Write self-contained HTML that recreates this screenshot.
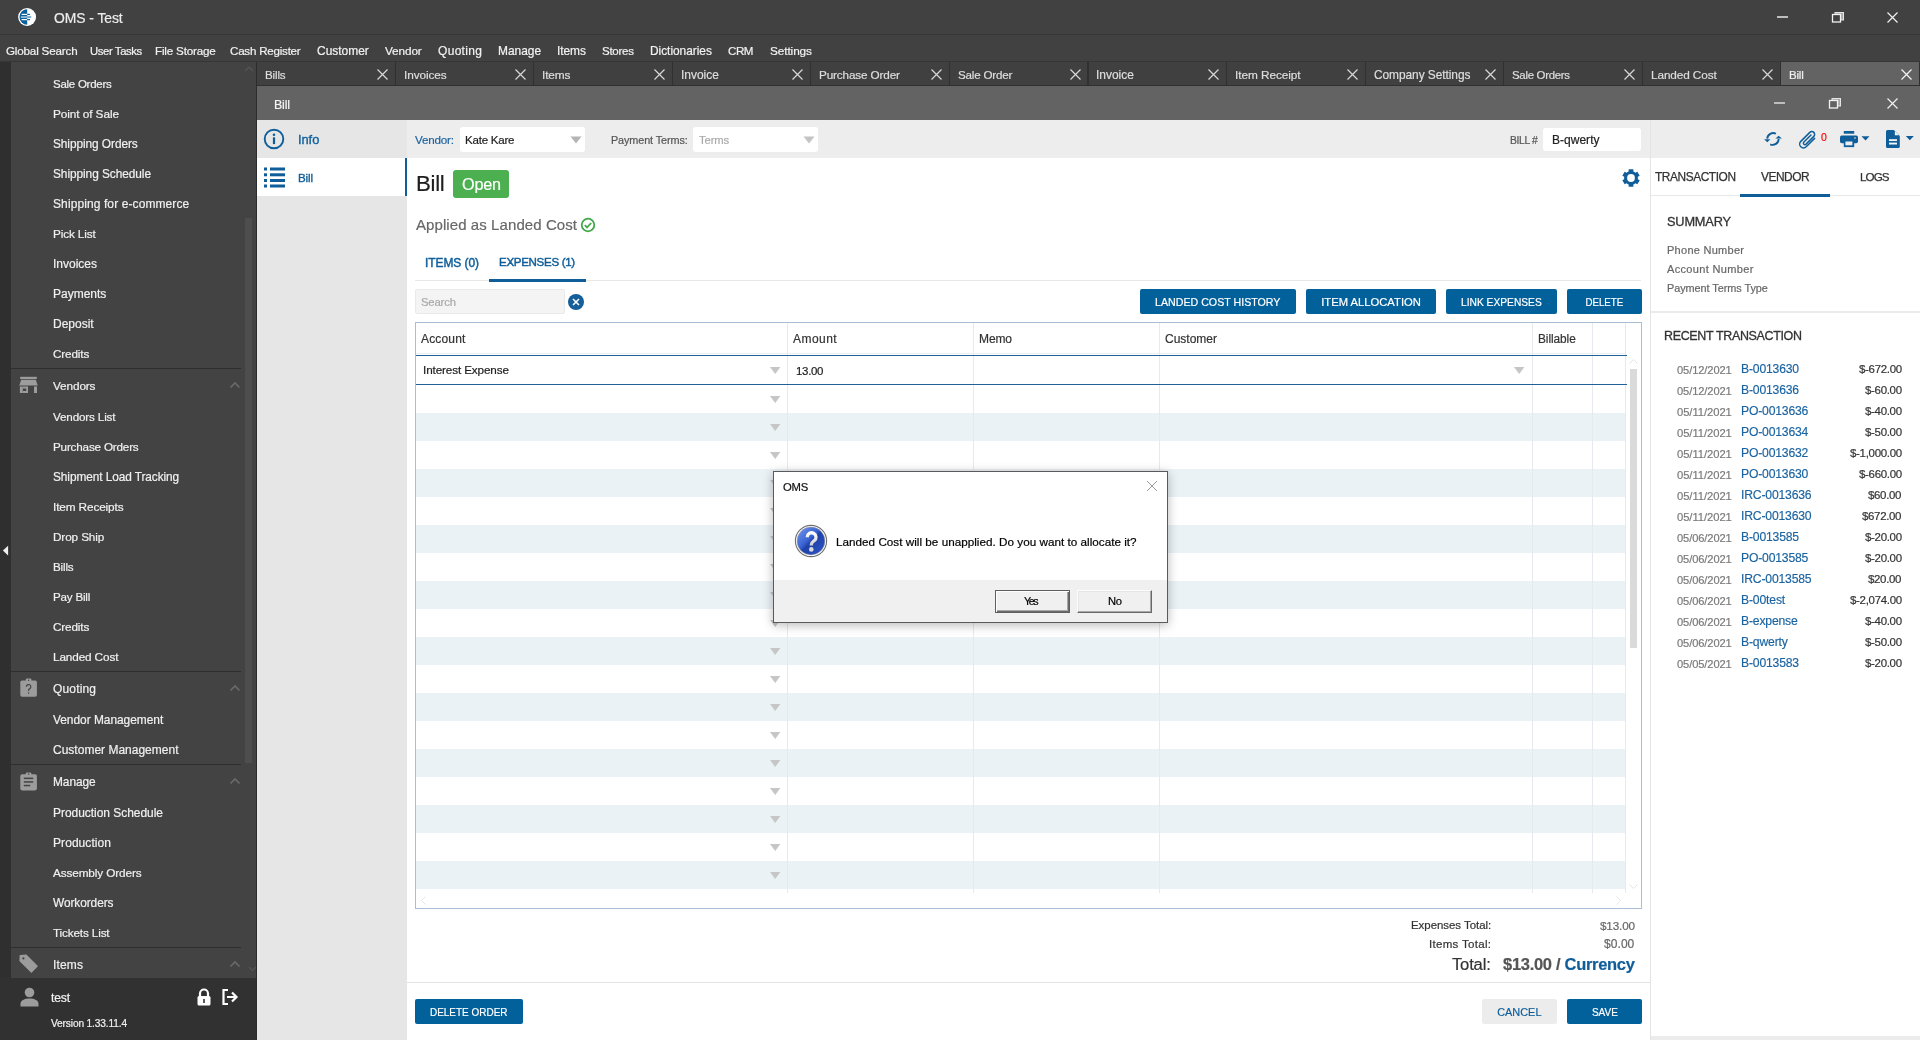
<!DOCTYPE html>
<html><head><meta charset="utf-8"><title>OMS - Test</title>
<style>
html,body{margin:0;padding:0;}
body{width:1920px;height:1040px;overflow:hidden;position:relative;background:#fff;font-family:"Liberation Sans", sans-serif;}
.a{position:absolute;}
.t{white-space:nowrap;will-change:transform;-webkit-text-stroke-width:0.2px;}
svg{display:block;overflow:visible;}
</style></head><body>
<div class="a" style="left:0px;top:0px;width:1920px;height:34px;background:#414141;"></div>
<div class="a" style="left:0px;top:34px;width:1920px;height:1px;background:#353535;"></div>
<div class="a" style="left:0px;top:35px;width:1920px;height:26px;background:#414141;"></div>
<div class="a" style="left:0px;top:61px;width:1920px;height:1px;background:#363636;"></div>
<svg class="a" style="left:17px;top:7px;" width="21" height="21" viewBox="0 0 21 21"><circle cx="10.1" cy="10" r="9" fill="#fff"/><path d="M10.2 2.3 A7.7 7.7 0 0 0 10.2 17.7 Z" fill="#0a5f9c"/><rect x="4.6" y="6.8" width="5.6" height="1.2" fill="#fff"/><rect x="10.2" y="6.8" width="2.8" height="1.2" fill="#0a5f9c"/><rect x="3.8" y="9.4" width="6.4" height="1.3" fill="#cfe0ee"/><rect x="10.2" y="9.4" width="4" height="1.3" fill="#3d80b5"/><rect x="4.6" y="12" width="5.6" height="1.2" fill="#fff"/><rect x="10.2" y="12" width="2.8" height="1.2" fill="#0a5f9c"/></svg>
<div class="a t" style="left:54px;top:9.0px;font-size:13.89px;line-height:18px;color:#ececec;font-weight:400;letter-spacing:-0.049px;">OMS - Test</div>
<div class="a" style="left:1777px;top:16px;width:11px;height:2px;background:#bdbdbd;"></div>
<svg class="a" style="left:1831px;top:11px;" width="14" height="12" viewBox="0 0 14 12"><rect x="4" y="1.5" width="8.5" height="7.5" fill="#a8a8a8" stroke="#e6e6e6" stroke-width="1"/><rect x="1.5" y="3.5" width="8" height="7.5" fill="#414141" stroke="#f2f2f2" stroke-width="1.3"/></svg>
<svg class="a" style="left:1887px;top:11.5px;" width="11" height="11" viewBox="0 0 11 11"><path d="M0.5 0.5L10.5 10.5M10.5 0.5L0.5 10.5" stroke="#f0f0f0" stroke-width="1.2"/></svg>
<div class="a t" style="left:6.1px;top:43.0px;font-size:11.64px;line-height:15px;color:#f2f2f2;font-weight:400;letter-spacing:-0.173px;">Global Search</div>
<div class="a t" style="left:90.4px;top:44.0px;font-size:11.27px;line-height:15px;color:#f2f2f2;font-weight:400;letter-spacing:-0.368px;">User Tasks</div>
<div class="a t" style="left:155.3px;top:43.0px;font-size:11.63px;line-height:15px;color:#f2f2f2;font-weight:400;letter-spacing:-0.172px;">File Storage</div>
<div class="a t" style="left:230.1px;top:44.0px;font-size:11.57px;line-height:15px;color:#f2f2f2;font-weight:400;letter-spacing:-0.214px;">Cash Register</div>
<div class="a t" style="left:317.2px;top:43.0px;font-size:11.98px;line-height:16px;color:#f2f2f2;font-weight:400;letter-spacing:-0.013px;">Customer</div>
<div class="a t" style="left:385.1px;top:43.0px;font-size:11.79px;line-height:15px;color:#f2f2f2;font-weight:400;letter-spacing:-0.119px;">Vendor</div>
<div class="a t" style="left:438px;top:43.0px;font-size:12px;line-height:16px;color:#f2f2f2;font-weight:400;letter-spacing:0.311px;">Quoting</div>
<div class="a t" style="left:498px;top:43.0px;font-size:11.96px;line-height:16px;color:#f2f2f2;font-weight:400;letter-spacing:-0.021px;">Manage</div>
<div class="a t" style="left:556.8px;top:44.0px;font-size:11.91px;line-height:15px;color:#f2f2f2;font-weight:400;letter-spacing:-0.052px;">Items</div>
<div class="a t" style="left:601.8px;top:44.0px;font-size:11.51px;line-height:15px;color:#f2f2f2;font-weight:400;letter-spacing:-0.27px;">Stores</div>
<div class="a t" style="left:649.8px;top:44.0px;font-size:11.92px;line-height:15px;color:#f2f2f2;font-weight:400;letter-spacing:-0.028px;">Dictionaries</div>
<div class="a t" style="left:728.2px;top:44.0px;font-size:11.59px;line-height:15px;color:#f2f2f2;font-weight:400;letter-spacing:-0.438px;">CRM</div>
<div class="a t" style="left:769.8px;top:44.0px;font-size:11.81px;line-height:15px;color:#f2f2f2;font-weight:400;letter-spacing:-0.092px;">Settings</div>
<div class="a" style="left:0px;top:62px;width:256px;height:916px;background:#434343;"></div>
<div class="a" style="left:0px;top:62px;width:11px;height:978px;background:#2f2f2f;"></div>
<div class="a" style="left:256px;top:62px;width:1px;height:978px;background:#2c2c2c;"></div>
<div class="a" style="left:0px;top:978px;width:256px;height:62px;background:#313131;"></div>
<div class="a" style="left:245px;top:218px;width:7px;height:545px;background:#4e4e4e;"></div>
<svg class="a" style="left:244px;top:66px;" width="10" height="6" viewBox="0 0 10 6"><path d="M1 5L5 1.2L9 5" fill="none" stroke="#555" stroke-width="1.3"/></svg>
<svg class="a" style="left:248px;top:966px;" width="9" height="6" viewBox="0 0 9 6"><path d="M1 1L4.5 4.5L8 1" fill="none" stroke="#555" stroke-width="1.1"/></svg>
<svg class="a" style="left:0px;top:544px;" width="10" height="13" viewBox="0 0 10 13"><path d="M8.1 1.7L2.9 6.6L8.1 11.5Z" fill="#f0f0f0"/></svg>
<div class="a t" style="left:53px;top:77.0px;font-size:11.49px;line-height:15px;color:#f0f0f0;font-weight:400;letter-spacing:-0.253px;">Sale Orders</div>
<div class="a t" style="left:53px;top:107.0px;font-size:11.82px;line-height:15px;color:#f0f0f0;font-weight:400;letter-spacing:-0.082px;">Point of Sale</div>
<div class="a t" style="left:53px;top:137.0px;font-size:11.86px;line-height:15px;color:#f0f0f0;font-weight:400;letter-spacing:-0.068px;">Shipping Orders</div>
<div class="a t" style="left:53px;top:167.0px;font-size:11.87px;line-height:15px;color:#f0f0f0;font-weight:400;letter-spacing:-0.057px;">Shipping Schedule</div>
<div class="a t" style="left:53px;top:196.0px;font-size:12px;line-height:16px;color:#f0f0f0;font-weight:400;letter-spacing:0.099px;">Shipping for e-commerce</div>
<div class="a t" style="left:53px;top:226.0px;font-size:11.74px;line-height:15px;color:#f0f0f0;font-weight:400;letter-spacing:-0.119px;">Pick List</div>
<div class="a t" style="left:53px;top:256.0px;font-size:12px;line-height:16px;color:#f0f0f0;font-weight:400;">Invoices</div>
<div class="a t" style="left:53px;top:286.0px;font-size:12px;line-height:16px;color:#f0f0f0;font-weight:400;">Payments</div>
<div class="a t" style="left:53px;top:316.0px;font-size:12px;line-height:16px;color:#f0f0f0;font-weight:400;">Deposit</div>
<div class="a t" style="left:53px;top:346.0px;font-size:11.73px;line-height:15px;color:#f0f0f0;font-weight:400;letter-spacing:-0.138px;">Credits</div>
<div class="a" style="left:11px;top:368px;width:230px;height:1px;background:#2e2e2e;"></div>
<svg class="a" style="left:19px;top:376px;" width="20" height="18" viewBox="0 0 20 18"><rect x="1.2" y="0.8" width="16.6" height="2.2" fill="#9c9c9c"/><path d="M2.2 3.8h14.6l2 5.6h-18.6z" fill="#9c9c9c"/><rect x="0.9" y="10.5" width="2.9" height="6.5" fill="#9c9c9c"/><rect x="15" y="10.5" width="3" height="6.5" fill="#9c9c9c"/><path d="M3.8 10.5h5.2v6.5h-5.2v-2h3.4v-2.5h-3.4z" fill="#9c9c9c"/></svg>
<div class="a t" style="left:52.5px;top:378.0px;font-size:11.79px;line-height:15px;color:#f0f0f0;font-weight:400;letter-spacing:-0.122px;">Vendors</div>
<svg class="a" style="left:229px;top:381px;" width="12" height="8" viewBox="0 0 12 8"><path d="M1.5 6.5L6 2L10.5 6.5" fill="none" stroke="#6a6a6a" stroke-width="1.6"/></svg>
<div class="a t" style="left:53px;top:409.0px;font-size:11.67px;line-height:15px;color:#f0f0f0;font-weight:400;letter-spacing:-0.151px;">Vendors List</div>
<div class="a t" style="left:53px;top:439.0px;font-size:11.66px;line-height:15px;color:#f0f0f0;font-weight:400;letter-spacing:-0.172px;">Purchase Orders</div>
<div class="a t" style="left:53px;top:470.0px;font-size:11.85px;line-height:15px;color:#f0f0f0;font-weight:400;letter-spacing:-0.073px;">Shipment Load Tracking</div>
<div class="a t" style="left:53px;top:499.0px;font-size:11.77px;line-height:15px;color:#f0f0f0;font-weight:400;letter-spacing:-0.111px;">Item Receipts</div>
<div class="a t" style="left:53px;top:529.0px;font-size:11.76px;line-height:15px;color:#f0f0f0;font-weight:400;letter-spacing:-0.119px;">Drop Ship</div>
<div class="a t" style="left:53px;top:559.0px;font-size:11.61px;line-height:15px;color:#f0f0f0;font-weight:400;letter-spacing:-0.174px;">Bills</div>
<div class="a t" style="left:53px;top:590.0px;font-size:11.59px;line-height:15px;color:#f0f0f0;font-weight:400;letter-spacing:-0.187px;">Pay Bill</div>
<div class="a t" style="left:53px;top:619.0px;font-size:11.73px;line-height:15px;color:#f0f0f0;font-weight:400;letter-spacing:-0.138px;">Credits</div>
<div class="a t" style="left:53px;top:649.0px;font-size:11.76px;line-height:15px;color:#f0f0f0;font-weight:400;letter-spacing:-0.124px;">Landed Cost</div>
<div class="a" style="left:11px;top:671px;width:230px;height:1px;background:#2e2e2e;"></div>
<svg class="a" style="left:20px;top:678px;" width="18" height="20" viewBox="0 0 18 20"><rect x="0.3" y="2.4" width="16.6" height="16.4" rx="1.8" fill="#9c9c9c"/><rect x="5.8" y="0.6" width="5.6" height="3.4" rx="1.2" fill="#9c9c9c"/><circle cx="8.6" cy="2.2" r="0.7" fill="#434343"/><path d="M6.4 8.8a2.2 2.2 0 1 1 3.4 1.8c-0.8 0.5-1.2 0.9-1.2 1.9v0.6" fill="none" stroke="#434343" stroke-width="1.2"/><circle cx="8.6" cy="15" r="0.75" fill="#434343"/></svg>
<div class="a t" style="left:52.5px;top:681.0px;font-size:12px;line-height:16px;color:#f0f0f0;font-weight:400;letter-spacing:0.161px;">Quoting</div>
<svg class="a" style="left:229px;top:684px;" width="12" height="8" viewBox="0 0 12 8"><path d="M1.5 6.5L6 2L10.5 6.5" fill="none" stroke="#6a6a6a" stroke-width="1.6"/></svg>
<div class="a t" style="left:53px;top:712.0px;font-size:11.93px;line-height:16px;color:#f0f0f0;font-weight:400;letter-spacing:-0.03px;">Vendor Management</div>
<div class="a t" style="left:53px;top:742.0px;font-size:12px;line-height:16px;color:#f0f0f0;font-weight:400;letter-spacing:0.006px;">Customer Management</div>
<div class="a" style="left:11px;top:764px;width:230px;height:1px;background:#2e2e2e;"></div>
<svg class="a" style="left:20px;top:772px;" width="18" height="20" viewBox="0 0 18 20"><rect x="0.3" y="2.2" width="16.6" height="16.2" rx="1.8" fill="#9c9c9c"/><rect x="5.8" y="0.4" width="5.6" height="3.4" rx="1.2" fill="#9c9c9c"/><circle cx="8.6" cy="2" r="0.7" fill="#434343"/><rect x="3.8" y="5.6" width="9.4" height="1.5" fill="#434343"/><rect x="3.8" y="9.2" width="9.4" height="1.5" fill="#434343"/><rect x="3.8" y="12.8" width="6.4" height="1.5" fill="#434343"/></svg>
<div class="a t" style="left:52.5px;top:775.0px;font-size:11.91px;line-height:15px;color:#f0f0f0;font-weight:400;letter-spacing:-0.066px;">Manage</div>
<svg class="a" style="left:229px;top:777px;" width="12" height="8" viewBox="0 0 12 8"><path d="M1.5 6.5L6 2L10.5 6.5" fill="none" stroke="#6a6a6a" stroke-width="1.6"/></svg>
<div class="a t" style="left:53px;top:805.0px;font-size:11.96px;line-height:16px;color:#f0f0f0;font-weight:400;letter-spacing:-0.017px;">Production Schedule</div>
<div class="a t" style="left:53px;top:835.0px;font-size:12px;line-height:16px;color:#f0f0f0;font-weight:400;letter-spacing:0.069px;">Production</div>
<div class="a t" style="left:53px;top:865.0px;font-size:11.77px;line-height:15px;color:#f0f0f0;font-weight:400;letter-spacing:-0.117px;">Assembly Orders</div>
<div class="a t" style="left:53px;top:896.0px;font-size:11.87px;line-height:15px;color:#f0f0f0;font-weight:400;letter-spacing:-0.064px;">Workorders</div>
<div class="a t" style="left:53px;top:925.0px;font-size:11.7px;line-height:15px;color:#f0f0f0;font-weight:400;letter-spacing:-0.129px;">Tickets List</div>
<div class="a" style="left:11px;top:947px;width:230px;height:1px;background:#2e2e2e;"></div>
<svg class="a" style="left:19px;top:954px;" width="20" height="20" viewBox="0 0 20 20"><path d="M1.2 1.6L7 1L18.2 12.2L12.4 18.2L1 6.8Z" fill="#9c9c9c" stroke="#9c9c9c" stroke-width="1.2" stroke-linejoin="round"/><circle cx="4.4" cy="4.4" r="1.1" fill="#434343"/></svg>
<div class="a t" style="left:52.5px;top:957.0px;font-size:12px;line-height:16px;color:#f0f0f0;font-weight:400;letter-spacing:0.139px;">Items</div>
<svg class="a" style="left:229px;top:960px;" width="12" height="8" viewBox="0 0 12 8"><path d="M1.5 6.5L6 2L10.5 6.5" fill="none" stroke="#6a6a6a" stroke-width="1.6"/></svg>
<svg class="a" style="left:20px;top:987px;" width="19" height="20" viewBox="0 0 19 20"><circle cx="9.5" cy="5.5" r="4.8" fill="#9c9c9c"/><path d="M0.5 19.5v-3c0-3 4-5 9-5s9 2 9 5v3z" fill="#9c9c9c"/></svg>
<div class="a t" style="left:51px;top:990.0px;font-size:12.2px;line-height:16px;color:#f2f2f2;font-weight:400;letter-spacing:-0.152px;">test</div>
<svg class="a" style="left:196px;top:988px;" width="16" height="18" viewBox="0 0 16 18"><path d="M4 8V5.5a4 4 0 0 1 8 0V8" fill="none" stroke="#fff" stroke-width="2.2"/><rect x="1.5" y="8" width="13" height="9.5" rx="1.5" fill="#fff"/><rect x="7.2" y="11" width="1.6" height="4" fill="#313131"/></svg>
<svg class="a" style="left:221px;top:988px;" width="18" height="18" viewBox="0 0 18 18"><path d="M7 2H2.5v14H7" fill="none" stroke="#fff" stroke-width="2.2"/><path d="M6 9h9M11 4.5L15.5 9L11 13.5" fill="none" stroke="#fff" stroke-width="2.2"/></svg>
<div class="a t" style="left:51px;top:1017.0px;font-size:10.18px;line-height:13px;color:#f0f0f0;font-weight:400;letter-spacing:-0.145px;">Version 1.33.11.4</div>
<div class="a" style="left:257px;top:62px;width:1663px;height:24px;background:#303030;"></div>
<div class="a" style="left:257.00px;top:62px;width:137.58px;height:23px;background:#404040"></div>
<div class="a t" style="left:265px;top:67.0px;font-size:11.61px;line-height:15px;color:#dedede;font-weight:400;letter-spacing:-0.174px;">Bills</div>
<svg class="a" style="left:377px;top:69px;" width="11" height="11" viewBox="0 0 11 11"><path d="M0.5 0.5L10.5 10.5M10.5 0.5L0.5 10.5" stroke="#d8d8d8" stroke-width="1.2"/></svg>
<div class="a" style="left:395.58px;top:62px;width:137.58px;height:23px;background:#404040"></div>
<div class="a t" style="left:404px;top:68.0px;font-size:11.82px;line-height:15px;color:#dedede;font-weight:400;letter-spacing:-0.085px;">Invoices</div>
<svg class="a" style="left:515px;top:69px;" width="11" height="11" viewBox="0 0 11 11"><path d="M0.5 0.5L10.5 10.5M10.5 0.5L0.5 10.5" stroke="#d8d8d8" stroke-width="1.2"/></svg>
<div class="a" style="left:534.17px;top:62px;width:137.58px;height:23px;background:#404040"></div>
<div class="a t" style="left:542px;top:68.0px;font-size:11.83px;line-height:15px;color:#dedede;font-weight:400;letter-spacing:-0.105px;">Items</div>
<svg class="a" style="left:654px;top:69px;" width="11" height="11" viewBox="0 0 11 11"><path d="M0.5 0.5L10.5 10.5M10.5 0.5L0.5 10.5" stroke="#d8d8d8" stroke-width="1.2"/></svg>
<div class="a" style="left:672.75px;top:62px;width:137.58px;height:23px;background:#404040"></div>
<div class="a t" style="left:681px;top:67.0px;font-size:11.98px;line-height:16px;color:#dedede;font-weight:400;letter-spacing:-0.006px;">Invoice</div>
<svg class="a" style="left:792px;top:69px;" width="11" height="11" viewBox="0 0 11 11"><path d="M0.5 0.5L10.5 10.5M10.5 0.5L0.5 10.5" stroke="#d8d8d8" stroke-width="1.2"/></svg>
<div class="a" style="left:811.33px;top:62px;width:137.58px;height:23px;background:#404040"></div>
<div class="a t" style="left:819px;top:67.0px;font-size:11.73px;line-height:15px;color:#dedede;font-weight:400;letter-spacing:-0.132px;">Purchase Order</div>
<svg class="a" style="left:931px;top:69px;" width="11" height="11" viewBox="0 0 11 11"><path d="M0.5 0.5L10.5 10.5M10.5 0.5L0.5 10.5" stroke="#d8d8d8" stroke-width="1.2"/></svg>
<div class="a" style="left:949.92px;top:62px;width:137.58px;height:23px;background:#404040"></div>
<div class="a t" style="left:958px;top:67.0px;font-size:11.62px;line-height:15px;color:#dedede;font-weight:400;letter-spacing:-0.193px;">Sale Order</div>
<svg class="a" style="left:1070px;top:69px;" width="11" height="11" viewBox="0 0 11 11"><path d="M0.5 0.5L10.5 10.5M10.5 0.5L0.5 10.5" stroke="#d8d8d8" stroke-width="1.2"/></svg>
<div class="a" style="left:1088.50px;top:62px;width:137.58px;height:23px;background:#404040"></div>
<div class="a t" style="left:1096px;top:67.0px;font-size:11.96px;line-height:16px;color:#dedede;font-weight:400;letter-spacing:-0.013px;">Invoice</div>
<svg class="a" style="left:1208px;top:69px;" width="11" height="11" viewBox="0 0 11 11"><path d="M0.5 0.5L10.5 10.5M10.5 0.5L0.5 10.5" stroke="#d8d8d8" stroke-width="1.2"/></svg>
<div class="a" style="left:1227.08px;top:62px;width:137.58px;height:23px;background:#404040"></div>
<div class="a t" style="left:1235px;top:68.0px;font-size:11.84px;line-height:15px;color:#dedede;font-weight:400;letter-spacing:-0.073px;">Item Receipt</div>
<svg class="a" style="left:1347px;top:69px;" width="11" height="11" viewBox="0 0 11 11"><path d="M0.5 0.5L10.5 10.5M10.5 0.5L0.5 10.5" stroke="#d8d8d8" stroke-width="1.2"/></svg>
<div class="a" style="left:1365.67px;top:62px;width:137.58px;height:23px;background:#404040"></div>
<div class="a t" style="left:1374px;top:68.0px;font-size:11.9px;line-height:15px;color:#dedede;font-weight:400;letter-spacing:-0.051px;">Company Settings</div>
<svg class="a" style="left:1485px;top:69px;" width="11" height="11" viewBox="0 0 11 11"><path d="M0.5 0.5L10.5 10.5M10.5 0.5L0.5 10.5" stroke="#d8d8d8" stroke-width="1.2"/></svg>
<div class="a" style="left:1504.25px;top:62px;width:137.58px;height:23px;background:#404040"></div>
<div class="a t" style="left:1512px;top:68.0px;font-size:11.42px;line-height:15px;color:#dedede;font-weight:400;letter-spacing:-0.286px;">Sale Orders</div>
<svg class="a" style="left:1624px;top:69px;" width="11" height="11" viewBox="0 0 11 11"><path d="M0.5 0.5L10.5 10.5M10.5 0.5L0.5 10.5" stroke="#d8d8d8" stroke-width="1.2"/></svg>
<div class="a" style="left:1642.83px;top:62px;width:137.58px;height:23px;background:#404040"></div>
<div class="a t" style="left:1651px;top:67.0px;font-size:11.79px;line-height:15px;color:#dedede;font-weight:400;letter-spacing:-0.111px;">Landed Cost</div>
<svg class="a" style="left:1762px;top:69px;" width="11" height="11" viewBox="0 0 11 11"><path d="M0.5 0.5L10.5 10.5M10.5 0.5L0.5 10.5" stroke="#d8d8d8" stroke-width="1.2"/></svg>
<div class="a" style="left:1781.42px;top:62px;width:137.58px;height:23px;background:#636363"></div>
<div class="a t" style="left:1789px;top:68.0px;font-size:11.54px;line-height:15px;color:#f0f0f0;font-weight:400;letter-spacing:-0.197px;">Bill</div>
<svg class="a" style="left:1901px;top:69px;" width="11" height="11" viewBox="0 0 11 11"><path d="M0.5 0.5L10.5 10.5M10.5 0.5L0.5 10.5" stroke="#f5f5f5" stroke-width="1.2"/></svg>
<div class="a" style="left:257px;top:86px;width:1663px;height:34px;background:#636363;"></div>
<div class="a t" style="left:273.5px;top:97.0px;font-size:12.49px;line-height:16px;color:#f5f5f5;font-weight:400;letter-spacing:-0.219px;">Bill</div>
<div class="a" style="left:1774px;top:102px;width:11px;height:2px;background:#bdbdbd;"></div>
<svg class="a" style="left:1828px;top:97px;" width="14" height="12" viewBox="0 0 14 12"><rect x="4" y="1.5" width="8.5" height="7.5" fill="#a8a8a8" stroke="#e6e6e6" stroke-width="1"/><rect x="1.5" y="3.5" width="8" height="7.5" fill="#636363" stroke="#f2f2f2" stroke-width="1.3"/></svg>
<svg class="a" style="left:1887px;top:97.5px;" width="11" height="11" viewBox="0 0 11 11"><path d="M0.5 0.5L10.5 10.5M10.5 0.5L0.5 10.5" stroke="#f0f0f0" stroke-width="1.2"/></svg>
<div class="a" style="left:257px;top:120px;width:150px;height:920px;background:#e6e6e6;"></div>
<div class="a" style="left:257px;top:158px;width:148px;height:38px;background:#ffffff;"></div>
<div class="a" style="left:405px;top:158px;width:2px;height:38px;background:#0f5e9a;"></div>
<svg class="a" style="left:263px;top:128px;" width="22" height="22" viewBox="0 0 22 22"><circle cx="11" cy="11" r="9.3" fill="none" stroke="#0f5e9a" stroke-width="1.9"/><circle cx="11" cy="6.8" r="1.3" fill="#0f5e9a"/><rect x="9.9" y="9.3" width="2.2" height="6.8" fill="#0f5e9a"/></svg>
<div class="a t" style="left:297.5px;top:131.0px;font-size:12.88px;line-height:17px;color:#0f5e9a;font-weight:400;letter-spacing:-0.061px;-webkit-text-stroke:0.35px #0f5e9a;">Info</div>
<svg class="a" style="left:263px;top:166px;" width="23" height="22" viewBox="0 0 23 22"><rect x="1" y="1.5" width="3" height="3" fill="#0f5e9a"/><rect x="7" y="1.5" width="15" height="3" fill="#0f5e9a"/><rect x="1" y="7.3" width="3" height="3" fill="#0f5e9a"/><rect x="7" y="7.3" width="15" height="3" fill="#0f5e9a"/><rect x="1" y="13" width="3" height="3" fill="#0f5e9a"/><rect x="7" y="13" width="15" height="3" fill="#0f5e9a"/><rect x="1" y="18.5" width="3" height="3" fill="#0f5e9a"/><rect x="7" y="18.5" width="15" height="3" fill="#0f5e9a"/></svg>
<div class="a t" style="left:297.5px;top:170.0px;font-size:11.61px;line-height:15px;color:#0f5e9a;font-weight:400;letter-spacing:-0.161px;-webkit-text-stroke:0.35px #0f5e9a;">Bill</div>
<div class="a" style="left:407px;top:120px;width:1243px;height:920px;background:#ffffff;"></div>
<div class="a" style="left:407px;top:120px;width:1243px;height:38px;background:#ededed;"></div>
<div class="a t" style="left:415.3px;top:132.0px;font-size:11.65px;line-height:15px;color:#1d64a0;font-weight:400;letter-spacing:-0.19px;">Vendor:</div>
<div class="a" style="left:460px;top:127px;width:125px;height:25px;background:#fff;border-radius:3px"></div>
<div class="a t" style="left:465.4px;top:133.0px;font-size:11.56px;line-height:15px;color:#222;font-weight:400;letter-spacing:-0.232px;">Kate Kare</div>
<svg class="a" style="left:570px;top:136px;" width="12" height="8" viewBox="0 0 12 8"><path d="M0.5 0.5h11L6 7.5z" fill="#b4b4b4"/></svg>
<div class="a t" style="left:610.6px;top:133.0px;font-size:10.82px;line-height:14px;color:#555;font-weight:400;letter-spacing:-0.094px;">Payment Terms:</div>
<div class="a" style="left:693px;top:127px;width:125px;height:25px;background:#fff;border-radius:3px"></div>
<div class="a t" style="left:698.5px;top:133.0px;font-size:11.29px;line-height:15px;color:#aaa;font-weight:400;letter-spacing:-0.13px;">Terms</div>
<svg class="a" style="left:803px;top:136px;" width="12" height="8" viewBox="0 0 12 8"><path d="M0.5 0.5h11L6 7.5z" fill="#c4c4c4"/></svg>
<div class="a t" style="left:1509.7px;top:134.0px;font-size:10.35px;line-height:13px;color:#555;font-weight:400;letter-spacing:-0.346px;">BILL #</div>
<div class="a" style="left:1543px;top:128px;width:98px;height:23px;background:#fff;border-radius:3px"></div>
<div class="a t" style="left:1551.6px;top:132.0px;font-size:12px;line-height:16px;color:#222;font-weight:400;letter-spacing:0.022px;">B-qwerty</div>
<div class="a" style="left:1650px;top:120px;width:270px;height:38px;background:#ededed;"></div>
<div class="a" style="left:1650px;top:120px;width:1px;height:920px;background:#e4e4e4;"></div>
<svg class="a" style="left:1763px;top:131px;" width="20" height="16" viewBox="0 0 20 16"><path d="M12.9 2.75A6 6 0 0 0 4.2 7.6" fill="none" stroke="#0f5e9a" stroke-width="1.9"/><path d="M1.1 8.3h6.3L4.3 11.2z" fill="#0f5e9a"/><path d="M7.2 13.3A6 6 0 0 0 15.7 7.9" fill="none" stroke="#0f5e9a" stroke-width="1.9"/><path d="M12.4 7.6h6.5L15.6 4.8z" fill="#0f5e9a"/></svg>
<svg class="a" style="left:1798px;top:129px;" width="19" height="20" viewBox="0 0 19 20"><path d="M16.6 9.4L8.2 17.8a3.8 3.8 0 0 1-5.4-5.4L11.8 3.4a2.8 2.8 0 0 1 4 4L7.8 15.4a1.5 1.5 0 0 1-2.1-2.1L13 6" fill="none" stroke="#0f5e9a" stroke-width="1.5" stroke-linecap="round"/></svg>
<div class="a t" style="left:1821px;top:130.0px;font-size:10.5px;line-height:14px;color:#ff0000;font-weight:400;">0</div>
<svg class="a" style="left:1839px;top:130px;" width="32" height="19" viewBox="0 0 32 19"><rect x="4.8" y="1" width="10.4" height="2.7" fill="#0f5e9a"/><rect x="1" y="5.5" width="18" height="7.8" rx="1.8" fill="#0f5e9a"/><rect x="4.8" y="10.5" width="10.4" height="6.6" fill="#0f5e9a"/><rect x="6.4" y="11.5" width="7" height="3.8" fill="#ededed"/><circle cx="16" cy="8" r="0.8" fill="#ededed"/><path d="M22.5 6.2h8l-4 4.3z" fill="#0f5e9a"/></svg>
<svg class="a" style="left:1885px;top:129px;" width="30" height="20" viewBox="0 0 30 20"><path d="M2.5 1H8.8L14.8 7V17.5a1.5 1.5 0 0 1-1.5 1.5H2.5a1.5 1.5 0 0 1-1.5-1.5V2.5a1.5 1.5 0 0 1 1.5-1.5z" fill="#0f5e9a"/><path d="M9.9 2.3V6.2H13.8z" fill="#fafafa"/><rect x="4" y="10.2" width="8" height="1.8" fill="#f5f5f5"/><rect x="4" y="13.6" width="8" height="1.9" fill="#f5f5f5"/><path d="M20.8 7h8l-4 4.3z" fill="#0f5e9a"/></svg>
<svg class="a" style="left:1620px;top:167px;" width="22" height="22" viewBox="0 0 22 22"><path fill="#0f5e9a" d="M7.55 5.02 L8.64 4.52 L8.67 2.31 L13.33 2.31 L13.36 4.52 L14.45 5.02 L15.44 5.71 L17.36 4.64 L19.69 8.67 L17.80 9.80 L17.90 11.00 L17.80 12.20 L19.69 13.33 L17.36 17.36 L15.44 16.29 L14.45 16.98 L13.36 17.48 L13.33 19.69 L8.67 19.69 L8.64 17.48 L7.55 16.98 L6.56 16.29 L4.64 17.36 L2.31 13.33 L4.20 12.20 L4.10 11.00 L4.20 9.80 L2.31 8.67 L4.64 4.64 L6.56 5.71Z"/><circle cx="11" cy="11" r="3.9" fill="#fff"/></svg>
<div class="a t" style="left:416.3px;top:169.0px;font-size:22.25px;line-height:29px;color:#1e1e1e;font-weight:400;letter-spacing:-0.324px;">Bill</div>
<div class="a" style="left:453px;top:170px;width:56px;height:28px;background:#4caf50;border-radius:3px"></div>
<div class="a t" style="left:461.5px;top:174.0px;font-size:16.22px;line-height:21px;color:#ffffff;font-weight:400;letter-spacing:-0.214px;">Open</div>
<div class="a t" style="left:415.5px;top:215.0px;font-size:15px;line-height:20px;color:#676767;font-weight:400;letter-spacing:0.082px;">Applied as Landed Cost</div>
<svg class="a" style="left:580px;top:217px;" width="16" height="16" viewBox="0 0 16 16"><circle cx="8" cy="8" r="6.3" fill="none" stroke="#43a94a" stroke-width="1.8"/><path d="M4.8 8.2l2.2 2.2 4.2-4.4" fill="none" stroke="#43a94a" stroke-width="1.8"/></svg>
<div class="a" style="left:415px;top:280px;width:1226px;height:1px;background:#e8e8e8;"></div>
<div class="a t" style="left:425px;top:255.0px;font-size:11.93px;line-height:16px;color:#0f5e9a;font-weight:400;letter-spacing:-0.039px;-webkit-text-stroke:0.45px #0f5e9a;">ITEMS (0)</div>
<div class="a t" style="left:499.4px;top:255.0px;font-size:11.52px;line-height:15px;color:#0f5e9a;font-weight:400;letter-spacing:-0.287px;-webkit-text-stroke:0.45px #0f5e9a;">EXPENSES (1)</div>
<div class="a" style="left:489px;top:279px;width:97px;height:3px;background:#0f5e9a;"></div>
<div class="a" style="left:415px;top:289px;width:150px;height:25px;background:#f4f4f4;box-sizing:border-box;border:1px solid #e9e9e9;border-radius:2px"></div>
<div class="a t" style="left:421px;top:295.0px;font-size:11.27px;line-height:15px;color:#a8a8a8;font-weight:400;letter-spacing:-0.141px;">Search</div>
<svg class="a" style="left:567px;top:293px;" width="18" height="18" viewBox="0 0 18 18"><circle cx="9" cy="9" r="8" fill="#145e99"/><path d="M6 6L12 12M12 6L6 12" stroke="#fff" stroke-width="1.6"/></svg>
<div class="a t" style="left:1140px;top:289px;width:156px;height:25px;background:#02609b;color:#fff;font-size:11.5px;line-height:27px;text-align:center;border-radius:2px"><span style="display:inline-block;transform:scaleX(0.926)">LANDED COST HISTORY</span></div>
<div class="a t" style="left:1306px;top:289px;width:130px;height:25px;background:#02609b;color:#fff;font-size:11.5px;line-height:27px;text-align:center;border-radius:2px"><span style="display:inline-block;transform:scaleX(0.977)">ITEM ALLOCATION</span></div>
<div class="a t" style="left:1446px;top:289px;width:111px;height:25px;background:#02609b;color:#fff;font-size:11.5px;line-height:27px;text-align:center;border-radius:2px"><span style="display:inline-block;transform:scaleX(0.890)">LINK EXPENSES</span></div>
<div class="a t" style="left:1567px;top:289px;width:75px;height:25px;background:#02609b;color:#fff;font-size:11.5px;line-height:27px;text-align:center;border-radius:2px"><span style="display:inline-block;transform:scaleX(0.845)">DELETE</span></div>
<div class="a" style="left:415px;top:322px;width:1227px;height:587px;background:#fff;box-sizing:border-box;border:1px solid #a9bed4"></div>
<div class="a" style="left:416px;top:413px;width:1209px;height:28px;background:#ebf2f6;"></div>
<div class="a" style="left:416px;top:469px;width:1209px;height:28px;background:#ebf2f6;"></div>
<div class="a" style="left:416px;top:525px;width:1209px;height:28px;background:#ebf2f6;"></div>
<div class="a" style="left:416px;top:581px;width:1209px;height:28px;background:#ebf2f6;"></div>
<div class="a" style="left:416px;top:637px;width:1209px;height:28px;background:#ebf2f6;"></div>
<div class="a" style="left:416px;top:693px;width:1209px;height:28px;background:#ebf2f6;"></div>
<div class="a" style="left:416px;top:749px;width:1209px;height:28px;background:#ebf2f6;"></div>
<div class="a" style="left:416px;top:805px;width:1209px;height:28px;background:#ebf2f6;"></div>
<div class="a" style="left:416px;top:861px;width:1209px;height:28px;background:#ebf2f6;"></div>
<div class="a" style="left:787px;top:323px;width:1px;height:570px;background:#e6e9ed;"></div>
<div class="a" style="left:973px;top:323px;width:1px;height:570px;background:#e6e9ed;"></div>
<div class="a" style="left:1159px;top:323px;width:1px;height:570px;background:#e6e9ed;"></div>
<div class="a" style="left:1532px;top:323px;width:1px;height:570px;background:#e6e9ed;"></div>
<div class="a" style="left:1592px;top:323px;width:1px;height:570px;background:#e6e9ed;"></div>
<div class="a" style="left:1625px;top:323px;width:1px;height:570px;background:#e6e9ed;"></div>
<div class="a" style="left:416px;top:353px;width:1209px;height:1px;background:#eeeeee;"></div>
<div class="a" style="left:416px;top:355px;width:1211px;height:1px;background:#1f6098;"></div>
<div class="a" style="left:416px;top:384px;width:1211px;height:1px;background:#1f6098;"></div>
<div class="a t" style="left:421.25px;top:331.0px;font-size:12px;line-height:16px;color:#333;font-weight:400;letter-spacing:0.173px;">Account</div>
<div class="a t" style="left:793px;top:331.0px;font-size:12px;line-height:16px;color:#333;font-weight:400;letter-spacing:0.448px;">Amount</div>
<div class="a t" style="left:979px;top:331.0px;font-size:12px;line-height:16px;color:#333;font-weight:400;letter-spacing:-0.1px;">Memo</div>
<div class="a t" style="left:1165.3px;top:331.0px;font-size:12.0px;line-height:16px;color:#333;font-weight:400;letter-spacing:-0.002px;">Customer</div>
<div class="a t" style="left:1538.3px;top:332.0px;font-size:11.86px;line-height:15px;color:#333;font-weight:400;letter-spacing:-0.064px;">Billable</div>
<div class="a t" style="left:422.5px;top:362.0px;font-size:11.73px;line-height:15px;color:#222;font-weight:400;letter-spacing:-0.13px;">Interest Expense</div>
<div class="a t" style="left:795.5px;top:364.0px;font-size:11.48px;line-height:15px;color:#222;font-weight:400;letter-spacing:-0.301px;">13.00</div>
<svg class="a" style="left:770px;top:367px;" width="11" height="7" viewBox="0 0 11 7"><path d="M0 0h10.4L5.2 7z" fill="#c6c6c6"/></svg>
<svg class="a" style="left:1514px;top:367px;" width="11" height="7" viewBox="0 0 11 7"><path d="M0 0h10.4L5.2 7z" fill="#c6c6c6"/></svg>
<svg class="a" style="left:770px;top:396px;" width="11" height="7" viewBox="0 0 11 7"><path d="M0 0h10.4L5.2 7z" fill="#c6c6c6"/></svg>
<svg class="a" style="left:770px;top:424px;" width="11" height="7" viewBox="0 0 11 7"><path d="M0 0h10.4L5.2 7z" fill="#c6c6c6"/></svg>
<svg class="a" style="left:770px;top:452px;" width="11" height="7" viewBox="0 0 11 7"><path d="M0 0h10.4L5.2 7z" fill="#c6c6c6"/></svg>
<svg class="a" style="left:770px;top:480px;" width="11" height="7" viewBox="0 0 11 7"><path d="M0 0h10.4L5.2 7z" fill="#c6c6c6"/></svg>
<svg class="a" style="left:770px;top:508px;" width="11" height="7" viewBox="0 0 11 7"><path d="M0 0h10.4L5.2 7z" fill="#c6c6c6"/></svg>
<svg class="a" style="left:770px;top:536px;" width="11" height="7" viewBox="0 0 11 7"><path d="M0 0h10.4L5.2 7z" fill="#c6c6c6"/></svg>
<svg class="a" style="left:770px;top:564px;" width="11" height="7" viewBox="0 0 11 7"><path d="M0 0h10.4L5.2 7z" fill="#c6c6c6"/></svg>
<svg class="a" style="left:770px;top:592px;" width="11" height="7" viewBox="0 0 11 7"><path d="M0 0h10.4L5.2 7z" fill="#c6c6c6"/></svg>
<svg class="a" style="left:770px;top:620px;" width="11" height="7" viewBox="0 0 11 7"><path d="M0 0h10.4L5.2 7z" fill="#c6c6c6"/></svg>
<svg class="a" style="left:770px;top:648px;" width="11" height="7" viewBox="0 0 11 7"><path d="M0 0h10.4L5.2 7z" fill="#c6c6c6"/></svg>
<svg class="a" style="left:770px;top:676px;" width="11" height="7" viewBox="0 0 11 7"><path d="M0 0h10.4L5.2 7z" fill="#c6c6c6"/></svg>
<svg class="a" style="left:770px;top:704px;" width="11" height="7" viewBox="0 0 11 7"><path d="M0 0h10.4L5.2 7z" fill="#c6c6c6"/></svg>
<svg class="a" style="left:770px;top:732px;" width="11" height="7" viewBox="0 0 11 7"><path d="M0 0h10.4L5.2 7z" fill="#c6c6c6"/></svg>
<svg class="a" style="left:770px;top:760px;" width="11" height="7" viewBox="0 0 11 7"><path d="M0 0h10.4L5.2 7z" fill="#c6c6c6"/></svg>
<svg class="a" style="left:770px;top:788px;" width="11" height="7" viewBox="0 0 11 7"><path d="M0 0h10.4L5.2 7z" fill="#c6c6c6"/></svg>
<svg class="a" style="left:770px;top:816px;" width="11" height="7" viewBox="0 0 11 7"><path d="M0 0h10.4L5.2 7z" fill="#c6c6c6"/></svg>
<svg class="a" style="left:770px;top:844px;" width="11" height="7" viewBox="0 0 11 7"><path d="M0 0h10.4L5.2 7z" fill="#c6c6c6"/></svg>
<svg class="a" style="left:770px;top:872px;" width="11" height="7" viewBox="0 0 11 7"><path d="M0 0h10.4L5.2 7z" fill="#c6c6c6"/></svg>
<div class="a" style="left:1630px;top:369px;width:7px;height:279px;background:#dadada;"></div>
<svg class="a" style="left:1629px;top:358px;" width="9" height="6" viewBox="0 0 9 6"><path d="M0.5 5.5L4.5 1.5L8.5 5.5" fill="none" stroke="#e2e2e2" stroke-width="1"/></svg>
<svg class="a" style="left:1629px;top:884px;" width="9" height="6" viewBox="0 0 9 6"><path d="M0.5 0.5L4.5 4.5L8.5 0.5" fill="none" stroke="#e2e2e2" stroke-width="1"/></svg>
<svg class="a" style="left:420px;top:896px;" width="6" height="9" viewBox="0 0 6 9"><path d="M5.5 0.5L1.5 4.5L5.5 8.5" fill="none" stroke="#e6e6e6" stroke-width="1"/></svg>
<svg class="a" style="left:1616px;top:896px;" width="6" height="9" viewBox="0 0 6 9"><path d="M0.5 0.5L4.5 4.5L0.5 8.5" fill="none" stroke="#e6e6e6" stroke-width="1"/></svg>
<div class="a t" style="right:429.025px;top:918.0px;font-size:11.44px;line-height:15px;color:#333;font-weight:400;letter-spacing:-0.025px;">Expenses Total:</div>
<div class="a t" style="right:285.5690000000001px;top:918.0px;font-size:11.72px;line-height:15px;color:#666;font-weight:400;letter-spacing:-0.169px;">$13.00</div>
<div class="a t" style="right:428.69px;top:937.0px;font-size:11.5px;line-height:15px;color:#333;font-weight:400;letter-spacing:0.31px;">Items Total:</div>
<div class="a t" style="right:285.3330000000001px;top:936.0px;font-size:12px;line-height:16px;color:#666;font-weight:400;letter-spacing:0.067px;">$0.00</div>
<div class="a t" style="right:429.181px;top:954.0px;font-size:16.61px;line-height:22px;color:#333;font-weight:400;letter-spacing:-0.181px;">Total:</div>
<div class="a t" style="right:285px;top:953.11px;font-size:16.5px;line-height:22px;font-weight:700;color:#555;letter-spacing:-0.3px">$13.00 / <span style="color:#0f5e9a">Currency</span></div>
<div class="a" style="left:407px;top:982px;width:1243px;height:1px;background:#e3e3e3;"></div>
<div class="a t" style="left:415px;top:999px;width:108px;height:25px;background:#02609b;color:#fff;font-size:11.5px;line-height:27px;text-align:center;border-radius:2px"><span style="display:inline-block;transform:scaleX(0.866)">DELETE ORDER</span></div>
<div class="a t" style="left:1482px;top:999px;width:75px;height:25px;background:#ececec;color:#0f5e9a;font-size:11.5px;line-height:27px;text-align:center;border-radius:2px"><span style="display:inline-block;transform:scaleX(0.949)">CANCEL</span></div>
<div class="a t" style="left:1567px;top:999px;width:75px;height:25px;background:#02609b;color:#fff;font-size:11.5px;line-height:27px;text-align:center;border-radius:2px"><span style="display:inline-block;transform:scaleX(0.872)">SAVE</span></div>
<div class="a" style="left:1651px;top:158px;width:269px;height:878px;background:#ffffff;"></div>
<div class="a" style="left:1651px;top:1036px;width:269px;height:4px;background:#ececec;"></div>
<div class="a t" style="left:1655px;top:170.3px;font-size:11.89px;line-height:15px;color:#333;font-weight:400;letter-spacing:-0.411px;-webkit-text-stroke:0.25px #333;">TRANSACTION</div>
<div class="a t" style="left:1761px;top:170.3px;font-size:11.9px;line-height:15px;color:#333;font-weight:400;letter-spacing:-0.475px;-webkit-text-stroke:0.25px #333;">VENDOR</div>
<div class="a t" style="left:1860px;top:169.3px;font-size:11.62px;line-height:15px;color:#333;font-weight:400;letter-spacing:-0.922px;-webkit-text-stroke:0.25px #333;">LOGS</div>
<div class="a" style="left:1651px;top:195px;width:269px;height:1px;background:#e8e8e8;"></div>
<div class="a" style="left:1740px;top:194px;width:90px;height:3px;background:#0f5e9a;"></div>
<div class="a t" style="left:1667px;top:213.0px;font-size:12.78px;line-height:17px;color:#333;font-weight:400;letter-spacing:-0.172px;-webkit-text-stroke:0.3px #333;">SUMMARY</div>
<div class="a t" style="left:1667px;top:243.0px;font-size:11px;line-height:14px;color:#666;font-weight:400;letter-spacing:0.273px;">Phone Number</div>
<div class="a t" style="left:1667px;top:262.0px;font-size:11px;line-height:14px;color:#666;font-weight:400;letter-spacing:0.336px;">Account Number</div>
<div class="a t" style="left:1667px;top:281.0px;font-size:10.89px;line-height:14px;color:#666;font-weight:400;letter-spacing:-0.05px;">Payment Terms Type</div>
<div class="a" style="left:1651px;top:311px;width:269px;height:2px;background:#ebebeb;"></div>
<div class="a t" style="left:1664.3px;top:328.0px;font-size:12.48px;line-height:16px;color:#333;font-weight:400;letter-spacing:-0.332px;-webkit-text-stroke:0.3px #333;">RECENT TRANSACTION</div>
<div class="a t" style="left:1677px;top:363.0px;font-size:11.12px;line-height:14px;color:#7a7a7a;font-weight:400;letter-spacing:-0.09px;">05/12/2021</div>
<div class="a t" style="left:1740.7px;top:361.0px;font-size:12.18px;line-height:16px;color:#1a63a0;font-weight:400;letter-spacing:-0.183px;-webkit-text-stroke:0.15px #1a63a0;">B-0013630</div>
<div class="a t" style="right:18.593999999999955px;top:362.0px;font-size:11.45px;line-height:15px;color:#333;font-weight:400;letter-spacing:-0.294px;">$-672.00</div>
<div class="a t" style="left:1677px;top:384.0px;font-size:11.12px;line-height:14px;color:#7a7a7a;font-weight:400;letter-spacing:-0.09px;">05/12/2021</div>
<div class="a t" style="left:1740.7px;top:382.0px;font-size:12.18px;line-height:16px;color:#1a63a0;font-weight:400;letter-spacing:-0.183px;-webkit-text-stroke:0.15px #1a63a0;">B-0013636</div>
<div class="a t" style="right:18.593999999999955px;top:383.0px;font-size:11.45px;line-height:15px;color:#333;font-weight:400;letter-spacing:-0.294px;">$-60.00</div>
<div class="a t" style="left:1677px;top:405.0px;font-size:11.21px;line-height:15px;color:#7a7a7a;font-weight:400;letter-spacing:-0.05px;">05/11/2021</div>
<div class="a t" style="left:1740.7px;top:403.0px;font-size:12.18px;line-height:16px;color:#1a63a0;font-weight:400;letter-spacing:-0.189px;-webkit-text-stroke:0.15px #1a63a0;">PO-0013636</div>
<div class="a t" style="right:18.593999999999955px;top:404.0px;font-size:11.45px;line-height:15px;color:#333;font-weight:400;letter-spacing:-0.294px;">$-40.00</div>
<div class="a t" style="left:1677px;top:426.0px;font-size:11.21px;line-height:15px;color:#7a7a7a;font-weight:400;letter-spacing:-0.05px;">05/11/2021</div>
<div class="a t" style="left:1740.7px;top:424.0px;font-size:12.18px;line-height:16px;color:#1a63a0;font-weight:400;letter-spacing:-0.189px;-webkit-text-stroke:0.15px #1a63a0;">PO-0013634</div>
<div class="a t" style="right:18.593999999999955px;top:425.0px;font-size:11.45px;line-height:15px;color:#333;font-weight:400;letter-spacing:-0.294px;">$-50.00</div>
<div class="a t" style="left:1677px;top:447.0px;font-size:11.21px;line-height:15px;color:#7a7a7a;font-weight:400;letter-spacing:-0.05px;">05/11/2021</div>
<div class="a t" style="left:1740.7px;top:445.0px;font-size:12.18px;line-height:16px;color:#1a63a0;font-weight:400;letter-spacing:-0.189px;-webkit-text-stroke:0.15px #1a63a0;">PO-0013632</div>
<div class="a t" style="right:18.576999999999956px;top:446.0px;font-size:11.45px;line-height:15px;color:#333;font-weight:400;letter-spacing:-0.277px;">$-1,000.00</div>
<div class="a t" style="left:1677px;top:468.0px;font-size:11.21px;line-height:15px;color:#7a7a7a;font-weight:400;letter-spacing:-0.05px;">05/11/2021</div>
<div class="a t" style="left:1740.7px;top:466.0px;font-size:12.18px;line-height:16px;color:#1a63a0;font-weight:400;letter-spacing:-0.189px;-webkit-text-stroke:0.15px #1a63a0;">PO-0013630</div>
<div class="a t" style="right:18.593999999999955px;top:467.0px;font-size:11.45px;line-height:15px;color:#333;font-weight:400;letter-spacing:-0.294px;">$-660.00</div>
<div class="a t" style="left:1677px;top:489.0px;font-size:11.21px;line-height:15px;color:#7a7a7a;font-weight:400;letter-spacing:-0.05px;">05/11/2021</div>
<div class="a t" style="left:1740.7px;top:487.0px;font-size:12.18px;line-height:16px;color:#1a63a0;font-weight:400;letter-spacing:-0.178px;-webkit-text-stroke:0.15px #1a63a0;">IRC-0013636</div>
<div class="a t" style="right:18.618999999999954px;top:488.0px;font-size:11.45px;line-height:15px;color:#333;font-weight:400;letter-spacing:-0.319px;">$60.00</div>
<div class="a t" style="left:1677px;top:510.0px;font-size:11.21px;line-height:15px;color:#7a7a7a;font-weight:400;letter-spacing:-0.05px;">05/11/2021</div>
<div class="a t" style="left:1740.7px;top:508.0px;font-size:12.18px;line-height:16px;color:#1a63a0;font-weight:400;letter-spacing:-0.178px;-webkit-text-stroke:0.15px #1a63a0;">IRC-0013630</div>
<div class="a t" style="right:18.610999999999954px;top:509.0px;font-size:11.45px;line-height:15px;color:#333;font-weight:400;letter-spacing:-0.311px;">$672.00</div>
<div class="a t" style="left:1677px;top:531.0px;font-size:11.12px;line-height:14px;color:#7a7a7a;font-weight:400;letter-spacing:-0.09px;">05/06/2021</div>
<div class="a t" style="left:1740.7px;top:529.0px;font-size:12.18px;line-height:16px;color:#1a63a0;font-weight:400;letter-spacing:-0.183px;-webkit-text-stroke:0.15px #1a63a0;">B-0013585</div>
<div class="a t" style="right:18.593999999999955px;top:530.0px;font-size:11.45px;line-height:15px;color:#333;font-weight:400;letter-spacing:-0.294px;">$-20.00</div>
<div class="a t" style="left:1677px;top:552.0px;font-size:11.12px;line-height:14px;color:#7a7a7a;font-weight:400;letter-spacing:-0.09px;">05/06/2021</div>
<div class="a t" style="left:1740.7px;top:550.0px;font-size:12.18px;line-height:16px;color:#1a63a0;font-weight:400;letter-spacing:-0.189px;-webkit-text-stroke:0.15px #1a63a0;">PO-0013585</div>
<div class="a t" style="right:18.593999999999955px;top:551.0px;font-size:11.45px;line-height:15px;color:#333;font-weight:400;letter-spacing:-0.294px;">$-20.00</div>
<div class="a t" style="left:1677px;top:573.0px;font-size:11.12px;line-height:14px;color:#7a7a7a;font-weight:400;letter-spacing:-0.09px;">05/06/2021</div>
<div class="a t" style="left:1740.7px;top:571.0px;font-size:12.18px;line-height:16px;color:#1a63a0;font-weight:400;letter-spacing:-0.178px;-webkit-text-stroke:0.15px #1a63a0;">IRC-0013585</div>
<div class="a t" style="right:18.618999999999954px;top:572.0px;font-size:11.45px;line-height:15px;color:#333;font-weight:400;letter-spacing:-0.319px;">$20.00</div>
<div class="a t" style="left:1677px;top:594.0px;font-size:11.12px;line-height:14px;color:#7a7a7a;font-weight:400;letter-spacing:-0.09px;">05/06/2021</div>
<div class="a t" style="left:1740.7px;top:592.0px;font-size:12.18px;line-height:16px;color:#1a63a0;font-weight:400;letter-spacing:-0.16px;-webkit-text-stroke:0.15px #1a63a0;">B-00test</div>
<div class="a t" style="right:18.576999999999956px;top:593.0px;font-size:11.45px;line-height:15px;color:#333;font-weight:400;letter-spacing:-0.277px;">$-2,074.00</div>
<div class="a t" style="left:1677px;top:615.0px;font-size:11.12px;line-height:14px;color:#7a7a7a;font-weight:400;letter-spacing:-0.09px;">05/06/2021</div>
<div class="a t" style="left:1740.7px;top:613.0px;font-size:12.18px;line-height:16px;color:#1a63a0;font-weight:400;letter-spacing:-0.18px;-webkit-text-stroke:0.15px #1a63a0;">B-expense</div>
<div class="a t" style="right:18.593999999999955px;top:614.0px;font-size:11.45px;line-height:15px;color:#333;font-weight:400;letter-spacing:-0.294px;">$-40.00</div>
<div class="a t" style="left:1677px;top:636.0px;font-size:11.12px;line-height:14px;color:#7a7a7a;font-weight:400;letter-spacing:-0.09px;">05/06/2021</div>
<div class="a t" style="left:1740.7px;top:634.0px;font-size:12.18px;line-height:16px;color:#1a63a0;font-weight:400;letter-spacing:-0.169px;-webkit-text-stroke:0.15px #1a63a0;">B-qwerty</div>
<div class="a t" style="right:18.593999999999955px;top:635.0px;font-size:11.45px;line-height:15px;color:#333;font-weight:400;letter-spacing:-0.294px;">$-50.00</div>
<div class="a t" style="left:1677px;top:657.0px;font-size:11.12px;line-height:14px;color:#7a7a7a;font-weight:400;letter-spacing:-0.09px;">05/05/2021</div>
<div class="a t" style="left:1740.7px;top:655.0px;font-size:12.18px;line-height:16px;color:#1a63a0;font-weight:400;letter-spacing:-0.183px;-webkit-text-stroke:0.15px #1a63a0;">B-0013583</div>
<div class="a t" style="right:18.593999999999955px;top:656.0px;font-size:11.45px;line-height:15px;color:#333;font-weight:400;letter-spacing:-0.294px;">$-20.00</div>
<div class="a" style="left:773px;top:471px;width:395px;height:152px;box-sizing:border-box;border:1px solid #5a5a5a;background:#fff;box-shadow:0 2px 10px rgba(0,0,0,0.28)"></div>
<div class="a" style="left:774px;top:580px;width:393px;height:42px;background:#f0f0f0;"></div>
<div class="a t" style="left:782.5px;top:480.0px;font-size:11.28px;line-height:15px;color:#111;font-weight:400;letter-spacing:-0.236px;">OMS</div>
<svg class="a" style="left:1146px;top:480px;" width="12" height="12" viewBox="0 0 12 12"><path d="M1 1L11 11M11 1L1 11" stroke="#9a9a9a" stroke-width="1"/></svg>
<svg class="a" style="left:794px;top:524px;" width="34" height="34" viewBox="0 0 34 34"><defs><linearGradient id="qg" x1="0" y1="0" x2="1" y2="1"><stop offset="0" stop-color="#7598f0"/><stop offset="0.42" stop-color="#3a63d2"/><stop offset="0.52" stop-color="#1f42a8"/><stop offset="1" stop-color="#2f55c9"/></linearGradient><linearGradient id="qw" x1="0" y1="0" x2="0" y2="1"><stop offset="0" stop-color="#ffffff"/><stop offset="1" stop-color="#d0d0d0"/></linearGradient></defs><circle cx="17" cy="17" r="15.6" fill="#fafafa" stroke="#707070" stroke-width="1.1"/><circle cx="17" cy="17" r="13.9" fill="url(#qg)" stroke="#9a9a9a" stroke-width="0.5"/><path d="M13.2 13.2a4.4 4.4 0 1 1 7 3.5c-1.7 1.2-2.9 1.8-2.9 4.1v0.6" fill="none" stroke="url(#qw)" stroke-width="3.3"/><circle cx="17.3" cy="25.4" r="2.3" fill="#dadada"/></svg>
<div class="a t" style="left:836px;top:534.0px;font-size:11.7px;line-height:15px;color:#000;font-weight:400;letter-spacing:0.019px;">Landed Cost will be unapplied. Do you want to allocate it?</div>
<div class="a" style="left:995px;top:590px;width:75px;height:23px;box-sizing:border-box;border:1px solid #5e5e5e;background:#f0f0f0;box-shadow:inset 1px 1px 0 #ffffff, inset -1px -1px 0 #6a6a6a, inset -2px -2px 0 #a8a8a8"></div>
<div class="a" style="left:1077px;top:590px;width:75px;height:23px;box-sizing:border-box;border-top:1px solid #fdfdfd;border-left:1px solid #fdfdfd;border-right:1px solid #696969;border-bottom:1px solid #696969;background:#f0f0f0;box-shadow:inset -1px -1px 0 #a8a8a8, inset 1px 1px 0 #e6e6e6"></div>
<div class="a t" style="left:1024px;top:594.0px;font-size:10.7px;line-height:14px;color:#000;font-weight:400;letter-spacing:-1.369px;">Yes</div>
<div class="a t" style="left:1107.6px;top:594.0px;font-size:11.22px;line-height:15px;color:#000;font-weight:400;letter-spacing:-0.344px;">No</div>
</body></html>
